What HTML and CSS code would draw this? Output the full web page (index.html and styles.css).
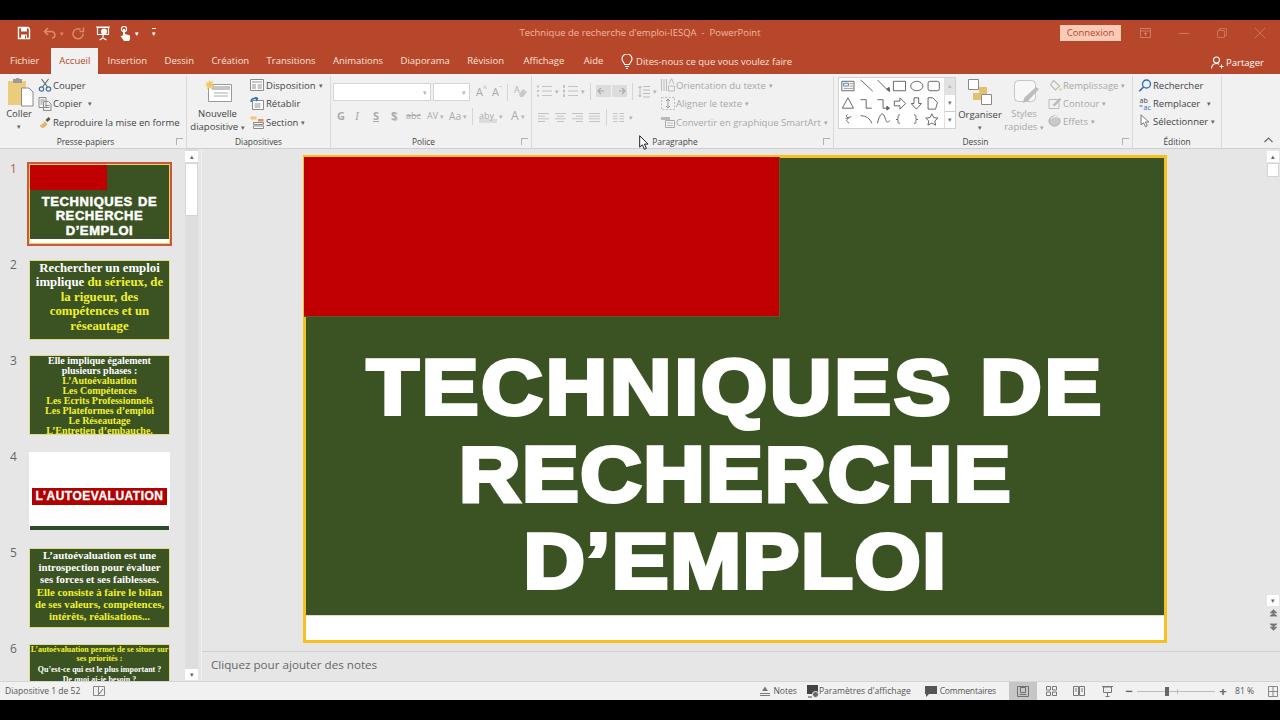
FILE: index.html
```html
<!DOCTYPE html>
<html lang="fr">
<head>
<meta charset="utf-8">
<title>Technique de recherche d'emploi-IESQA - PowerPoint</title>
<link rel="stylesheet" href="styles.css">
</head>
<body>
<div class="black top-black"></div>
<header class="titlebar">
  <div class="qat">
    <svg class="q-save" width="14" height="14" viewBox="0 0 14 14"><path d="M1.500 1.500h9.500l1.500 1.500v9.500h-11z" fill="none" stroke="#fff" stroke-width="1.400"/><path d="M4 2h6v3.500H4zM4 8.500h6v4H4z" fill="#fff"/><path d="M8 9.500h1v3H8z" fill="#b7472a"/></svg>
    <svg class="q-undo" width="14" height="12" viewBox="0 0 14 12"><path d="M5 1 1.500 4.500 5 8M2 4.500h6c5 0 5 6.500 1 6.500" fill="none" stroke="#d98a70" stroke-width="1.600"/></svg>
    <span class="q-caret faded">▾</span>
    <svg class="q-redo" width="13" height="13" viewBox="0 0 13 13"><path d="M8.500 2.500A5 5 0 1 0 11 6.500M11.500 .5v4h-4" fill="none" stroke="#d98a70" stroke-width="1.500"/></svg>
    <svg class="q-pres" width="16" height="15" viewBox="0 0 16 15"><path d="M1 1h14M2.500 1.500h11v7h-11zM8 8.500V12M4.500 14 8 12l3.500 2" fill="none" stroke="#fff" stroke-width="1.200"/><circle cx="9" cy="5.500" r="3" fill="#fff"/></svg>
    <svg class="q-touch" width="13" height="15" viewBox="0 0 13 15"><circle cx="5" cy="3" r="2.600" fill="none" stroke="#fff" stroke-width="1.200"/><path d="M4 3h2v5l5 1.500V13l-1 2H5L1.500 10 4 9.500z" fill="#fff"/></svg>
    <span class="q-caret">▾</span>
    <span class="q-more">▾</span>
  </div>
  <div class="doc-title">Technique de recherche d'emploi-IESQA  -  PowerPoint</div>
  <div class="win-controls">
    <span class="connexion">Connexion</span>
    <svg class="w-ribbon" width="11" height="10" viewBox="0 0 11 10"><path d="M.5.5h10v9H.5zM.5 3h10M5.500 8V4.500M4 6l1.500-1.500L7 6" fill="none" stroke="#cf7d62"/></svg>
    <svg class="w-btn" width="10" height="10" viewBox="0 0 10 10"><path d="M0 5.500h10" stroke="#c9735a"/></svg>
    <svg class="w-btn" width="10" height="10" viewBox="0 0 10 10"><path d="M.5 2.500h7v7h-7zM2.500 2.500v-2h7v7h-2" fill="none" stroke="#c9735a"/></svg>
    <svg class="w-btn" width="10" height="10" viewBox="0 0 10 10"><path d="m0 0 10 10M10 0 0 10" stroke="#c9735a"/></svg>
  </div>
</header>
<nav class="tabs">
  <span class="tab">Fichier</span>
  <span class="tab active">Accueil</span>
  <span class="tab">Insertion</span>
  <span class="tab">Dessin</span>
  <span class="tab">Création</span>
  <span class="tab">Transitions</span>
  <span class="tab">Animations</span>
  <span class="tab">Diaporama</span>
  <span class="tab">Révision</span>
  <span class="tab">Affichage</span>
  <span class="tab">Aide</span>
  <span class="tell">
    <svg width="12" height="15" viewBox="0 0 12 15"><path d="M3.500 10.500C3 8 1 7.500 1 5a5 5 0 0 1 10 0c0 2.500-2 3-2.500 5.500zM4 12.500h4M5 14.500h2" fill="none" stroke="#fff" stroke-width="1.100"/></svg>
    Dites-nous ce que vous voulez faire
  </span>
  <span class="share">
    <svg width="13" height="13" viewBox="0 0 13 13"><circle cx="5.500" cy="4" r="3" fill="none" stroke="#fff" stroke-width="1.100"/><path d="M.5 12.500c0-3 2-5 5-5 1 0 2 .3 2.500.7M10.500 8.500v4M8.500 10.500h4" fill="none" stroke="#fff" stroke-width="1.100"/></svg>
    Partager
  </span>
</nav>
<section class="ribbon">
  <div class="group g-clip">
    <div class="group-body">
      <div class="big b-paste">
        <svg width="26" height="29" viewBox="0 0 26 29"><path d="M0 3h18v24H0z" fill="#eccb7c"/><path d="M5 1h2.500l1-1h2l1 1H14v4H5z" fill="#9a9a9a"/><path d="M13.500 10H21l4 4v14H13.500z" fill="#fff" stroke="#8a8a8a"/></svg>
        <span>Coller</span><span class="caret">▾</span>
      </div>
      <div class="rows r-clip">
        <div class="row"><svg width="13" height="14" viewBox="0 0 13 14"><path d="m3 1 6 8M10 1 4 9" fill="none" stroke="#6a6a6a" stroke-width="1.200"/><circle cx="3" cy="11" r="2.200" fill="none" stroke="#3f6fa8" stroke-width="1.200"/><circle cx="10" cy="11" r="2.200" fill="none" stroke="#3f6fa8" stroke-width="1.200"/></svg><span>Couper</span></div>
        <div class="row"><svg width="13" height="14" viewBox="0 0 13 14"><path d="M.5.5h7v10h-7zM5 4.500h5l2.500 2.500v6.500H5zM2 3h4M2 5h2M2 7h2M7 8.500h4M7 10.500h4" fill="#f4f4f4" stroke="#8a8a8a"/></svg><span>Copier</span><span class="caret c-copy">▾</span></div>
        <div class="row"><svg width="13" height="13" viewBox="0 0 13 13"><path d="M1 9c3 0 4-2 5-4l3 3c-1 2-3 4-6 4z" fill="#e2b768"/><path d="m7 4 3-3 2 2-3 3z" fill="#555"/></svg><span>Reproduire la mise en forme</span></div>
      </div>
    </div>
    <div class="group-label has-launcher">Presse-papiers<i class="launcher"></i></div>
  </div>
  <div class="group g-slides">
    <div class="group-body">
      <div class="big b-new">
        <svg width="28" height="23" viewBox="0 0 28 23"><path d="M3.500 5.500h23v17h-23z" fill="#fff" stroke="#9a9a9a"/><path d="M7 7h18v4H7z" fill="#c5c5c5"/><path d="M9 14h14M9 17h14" stroke="#aaa"/><path d="m4.500 0 1 3 3-1-1.500 3 2.500 1.500-3 1 .5 3-2.500-2-2.500 2 .5-3-3-1L2 6 .5 3l3 1z" fill="#f0c95e"/></svg>
        <span>Nouvelle</span><span>diapositive <b class="caret inline">▾</b></span>
      </div>
      <div class="rows r-slides">
        <div class="row"><svg width="14" height="12" viewBox="0 0 14 12"><path d="M.5.5h13v11H.5z" fill="#fff" stroke="#8a8a8a"/><path d="M2 2h10v2H2zM2 5h4v5H2zM7.500 5H12v5H7.500z" fill="#c8c8c8"/></svg><span>Disposition</span><span class="caret c-inline">▾</span></div>
        <div class="row"><svg width="14" height="13" viewBox="0 0 14 13"><path d="M2.500 3.500h11v9h-11z" fill="#fff" stroke="#8a8a8a"/><path d="M4.500 6h6v5h-6z" fill="#c8c8c8"/><path d="M1 5c0-3 3-4.500 6-3.500M5 .2 7.500 1.500 6 4" fill="none" stroke="#2f6fb0" stroke-width="1.500"/></svg><span>Rétablir</span></div>
        <div class="row"><svg width="14" height="13" viewBox="0 0 14 13"><path d="M.5.5h6v3h-6z" fill="#efc777"/><path d="M3.500 6.500h10v2h-10zM3.500 10h10v2.500h-10z" fill="#fff" stroke="#8a8a8a"/><path d="M8 3h5.500v2.500H8z" fill="#e98b5e"/></svg><span>Section</span><span class="caret c-inline">▾</span></div>
      </div>
    </div>
    <div class="group-label">Diapositives</div>
  </div>
  <div class="group g-font">
    <div class="group-body col">
      <div class="tool-row tr-font">
        <span class="combo c-name"><b class="caret">▾</b></span>
        <span class="combo c-size"><b class="caret">▾</b></span>
        <span class="gly g-a1">A<sup>^</sup></span>
        <span class="gly g-a2">A<sup>ˇ</sup></span>
        <i class="vsep"></i>
        <svg class="g-clear" width="15" height="14" viewBox="0 0 15 14"><text x="1" y="8" font-size="9" fill="#b5b5b5" font-family="Open Sans">A</text><path d="m6 9 4-5 4 3-4 5H7z" fill="#c9c9c9"/></svg>
      </div>
      <div class="tool-row tr-fmt">
        <span class="fmt f-g">G</span>
        <span class="fmt f-i">I</span>
        <span class="fmt f-s">S</span>
        <span class="fmt f-sh">S</span>
        <span class="fmt f-abc">abc</span>
        <span class="fmt f-av">AV</span><b class="caret">▾</b>
        <span class="fmt f-aa">Aa</span><b class="caret">▾</b>
        <i class="vsep"></i>
        <span class="fmt f-aby">aby</span><b class="caret">▾</b>
        <span class="fmt f-ca">A</span><b class="caret">▾</b>
      </div>
    </div>
    <div class="group-label has-launcher">Police<i class="launcher"></i></div>
  </div>
  <div class="group g-para">
    <div class="group-body">
      <div class="col p-left">
        <div class="tool-row tr-para1">
          <svg width="15" height="12" viewBox="0 0 15 12"><path d="M5 1.500h10M5 6h10M5 10.500h10" stroke="#c4c4c4"/><path d="M0 .5h2v2H0zM0 5h2v2H0zM0 9.500h2v2H0z" fill="#c4c4c4"/></svg><b class="caret">▾</b>
          <svg width="15" height="12" viewBox="0 0 15 12"><path d="M5 1.500h10M5 6h10M5 10.500h10" stroke="#c4c4c4"/><path d="M0 0h2v3H0zM0 4.500h2v3H0zM0 9h2v3H0z" fill="#c4c4c4"/></svg><b class="caret">▾</b>
          <i class="vsep vs-a"></i>
          <svg class="indent" width="15" height="12" viewBox="0 0 15 12"><path d="M0 0h15v12H0z" fill="#dcdcdc"/><path d="M8 6H2M5 3 2 6l3 3" fill="none" stroke="#aaa" stroke-width="1.200"/></svg>
          <svg class="indent" width="15" height="12" viewBox="0 0 15 12"><path d="M0 0h15v12H0z" fill="#dcdcdc"/><path d="M7 6h6M10 3l3 3-3 3" fill="none" stroke="#aaa" stroke-width="1.200"/></svg>
          <i class="vsep vs-b"></i>
          <svg width="12" height="13" viewBox="0 0 12 13"><path d="M5 1.500h7M5 5h7M5 8.500h7M5 12h7M2 1v11M.5 3 2 1l1.500 2M.5 10 2 12l1.500-2" fill="none" stroke="#bbb"/></svg><b class="caret">▾</b>
        </div>
        <div class="tool-row tr-para2">
          <svg width="11" height="9" viewBox="0 0 11 9"><path d="M0 .5h11M0 3.200h7M0 5.800h11M0 8.500h7" stroke="#c4c4c4"/></svg>
          <svg width="11" height="9" viewBox="0 0 11 9"><path d="M0 .5h11M2 3.200h7M0 5.800h11M2 8.500h7" stroke="#c4c4c4"/></svg>
          <svg width="11" height="9" viewBox="0 0 11 9"><path d="M0 .5h11M4 3.200h7M0 5.800h11M4 8.500h7" stroke="#c4c4c4"/></svg>
          <svg width="11" height="9" viewBox="0 0 11 9"><path d="M0 .5h11M0 3.200h11M0 5.800h11M0 8.500h11" stroke="#c4c4c4"/></svg>
          <i class="vsep"></i>
          <svg width="11" height="9" viewBox="0 0 11 9"><path d="M0 .5h4.500M0 3.200h4.500M0 5.800h4.500M0 8.500h4.500M6.500 .5H11M6.500 3.200H11M6.500 5.800H11M6.500 8.500H11" stroke="#c4c4c4"/></svg><b class="caret">▾</b>
        </div>
      </div>
      <div class="rows r-para disabled">
        <div class="row"><svg width="14" height="14" viewBox="0 0 14 14"><path d="M.5 1v12M3 1v12M5.500 1v12" stroke="#bbb"/><path d="M7.500 8h6v5h-6zM8 6l2.500-5.500L13 6" fill="none" stroke="#bbb"/></svg><span>Orientation du texte</span><span class="caret c-inline">▾</span></div>
        <div class="row"><svg width="14" height="13" viewBox="0 0 14 13"><path d="M.5.5h13v12H.5z" fill="none" stroke="#bbb" stroke-dasharray="2 1.500"/><path d="M7 2.500v8M5 4l2-2 2 2M5 9l2 2 2-2" fill="none" stroke="#999"/></svg><span>Aligner le texte</span><span class="caret c-inline">▾</span></div>
        <div class="row"><svg width="14" height="12" viewBox="0 0 14 12"><path d="M4.500 4.500h9v7h-9z" fill="#f4f4f4" stroke="#aaa"/><path d="M0 1h9v3H0z" fill="#bbb"/><path d="M6 7h6M6 9.500h6" stroke="#bbb"/></svg><span>Convertir en graphique SmartArt</span><span class="caret c-inline">▾</span></div>
      </div>
    </div>
    <div class="group-label has-launcher">Paragraphe<i class="launcher"></i></div>
  </div>
  <div class="group g-draw">
    <div class="group-body">
      <div class="gallery">
        <svg width="105" height="50" viewBox="0 2 112 53" preserveAspectRatio="none" fill="none" stroke="#5f5f5f">
          <path d="M3 5.500h13v10H3z"/><path d="M5 7.500h5v3H5z" stroke="#4a7ab0"/><path d="M11 8h4M11 10.500h4M5 13h10" stroke="#999"/>
          <path d="m23 4 13 12M41 4l12 12"/><path d="m51 13.500 3 3-.5-4.500z" fill="#5f5f5f"/>
          <path d="M58 5.500h13v10H58z"/><ellipse cx="83" cy="10.500" rx="6.500" ry="5"/><path d="M97 5.500h8a2 2 0 0 1 2 2v6a2 2 0 0 1-2 2h-8a2 2 0 0 1-2-2v-6a2 2 0 0 1 2-2z"/>
          <path d="m9.500 23 6 11h-12z"/>
          <path d="M23 25h6v9h6M41 25h6v9h5"/><path d="m51 32 3 2-3 2z" fill="#5f5f5f"/>
          <path d="M59 26.500h6V23l6 6-6 6v-3.500h-6z"/><path d="M80 23h5v6h3l-5.500 6-5.500-6h3z"/><path d="M95 23h5l5 5-2 7H95z"/>
          <path d="M9 41c-4 2 3 3 0 5s3 3 1 4M13 43l-6 2"/><path d="M23 42c6 0 10 3 12 8"/><path d="M41 50c3-12 6-12 8-6s3 6 5 3"/>
          <path d="M65 41c-2 0-2 1-2 3s0 2-2 2c2 0 2 0 2 2s0 2 2 2"/><path d="M80 41c2 0 2 1 2 3s0 2 2 2c-2 0-2 0-2 2s0 2-2 2"/>
          <path d="m99 40 2 4 4.500.5-3.300 3 .9 4.500-4.100-2.300-4.100 2.300.9-4.500-3.300-3 4.500-.5z"/>
        </svg>
        <div class="gal-scroll">
          <span class="gs gs-up">▴</span><span class="gs gs-down">▾</span><span class="gs gs-more">▾</span>
        </div>
      </div>
      <div class="big b-org">
        <svg width="25" height="26" viewBox="0 0 25 26"><path d="M11 8h8v7h-8zM5 14h8v7H5z" fill="#e4c073"/><path d="M.5.5h10v10H.5zM13.500 15.500h10v10h-10z" fill="#fff" stroke="#8a8a8a"/></svg>
        <span>Organiser</span><span class="caret">▾</span>
      </div>
      <div class="big b-styles disabled">
        <svg width="26" height="25" viewBox="0 0 26 25"><rect x=".5" y=".5" width="21" height="21" rx="4" fill="#f7f7f7" stroke="#c5c5c5"/><path d="m10 18 12-11 3 2-11 12-5 2z" fill="#bdbdbd"/></svg>
        <span>Styles</span><span>rapides <b class="caret inline">▾</b></span>
      </div>
      <div class="rows r-draw disabled">
        <div class="row"><svg width="13" height="13" viewBox="0 0 13 13"><path d="M5 1.500 11 7l-4 4-5-5z" fill="none" stroke="#bbb" stroke-width="1.200"/><path d="M12 9.500v2" stroke="#e6c37a" stroke-width="2"/></svg><span>Remplissage</span><span class="caret c-inline">▾</span></div>
        <div class="row"><svg width="13" height="12" viewBox="0 0 13 12"><path d="M.5 2.500h10v9H.5z" fill="none" stroke="#bbb"/><path d="m4 8 7-7 2 1.500L6 9.500z" fill="#bbb"/></svg><span>Contour</span><span class="caret c-inline">▾</span></div>
        <div class="row"><svg width="13" height="12" viewBox="0 0 13 12"><ellipse cx="6" cy="6" rx="5.500" ry="5" fill="#c9c9c9" stroke="#aaa"/><path d="M2 4c3-3 6-3 9-1" stroke="#fff" fill="none"/></svg><span>Effets</span><span class="caret c-inline">▾</span></div>
      </div>
    </div>
    <div class="group-label has-launcher">Dessin<i class="launcher"></i></div>
  </div>
  <div class="group g-edit">
    <div class="group-body">
      <div class="rows r-edit">
        <div class="row"><svg width="13" height="13" viewBox="0 0 13 13"><circle cx="8" cy="5" r="4" fill="none" stroke="#2b6cb0" stroke-width="1.300"/><path d="M5 8 .8 12.200" stroke="#2b6cb0" stroke-width="1.600"/></svg><span>Rechercher</span></div>
        <div class="row"><svg width="13" height="13" viewBox="0 0 13 13"><text x="1" y="6" font-size="7" fill="#444" font-family="Open Sans">ab</text><text x="5" y="12.500" font-size="7" fill="#2b6cb0" font-family="Open Sans">ac</text><path d="M4 9H1" stroke="#2b6cb0"/></svg><span>Remplacer</span><span class="caret c-rep">▾</span></div>
        <div class="row"><svg width="13" height="14" viewBox="0 0 13 14"><path d="M2.500 .8v10l2.500-2 2 4 1.800-1-2-3.800h3.500z" fill="#fff" stroke="#777"/></svg><span>Sélectionner</span><span class="caret c-inline">▾</span></div>
      </div>
    </div>
    <div class="group-label">Édition</div>
  </div>
  <div class="collapse"><svg width="9" height="6" viewBox="0 0 9 6"><path d="m.5 5 4-4 4 4" fill="none" stroke="#666" stroke-width="1.200"/></svg></div>
</section>
<svg class="cursor" width="10" height="15" viewBox="0 0 10 15"><path d="M.7.7v11.500l2.700-2.400 2 4.500 2-.9-2-4.300h3.600z" fill="#fff" stroke="#222"/></svg>
<div class="workspace">
  <aside class="thumbs">
    <div class="thumb-list">
      <div class="thumb-row first"><span class="num sel">1</span>
        <div class="thumb t1">
          <div class="t1-red"></div>
          <div class="t1-title">TECHNIQUES DE<br>RECHERCHE<br>D’EMPLOI</div>
          <div class="t1-foot"></div>
        </div>
      </div>
      <div class="thumb-row"><span class="num">2</span>
        <div class="thumb green t2">Rechercher un emploi<br>implique <em>du sérieux, de<br>la rigueur, des<br>compétences et un<br>réseautage</em></div>
      </div>
      <div class="thumb-row"><span class="num">3</span>
        <div class="thumb green t3">Elle implique également<br>plusieurs phases :<br><em>L’Autoévaluation<br>Les Compétences<br>Les Ecrits Professionnels<br>Les Plateformes d’emploi<br>Le Réseautage<br>L’Entretien d’embauche.</em></div>
      </div>
      <div class="thumb-row"><span class="num">4</span>
        <div class="thumb t4"><div class="t4-bar">L’AUTOEVALUATION</div><div class="t4-foot"></div></div>
      </div>
      <div class="thumb-row"><span class="num">5</span>
        <div class="thumb green t5">L’autoévaluation est une<br>introspection pour évaluer<br>ses forces et ses faiblesses.<br><em class="t5-em">Elle consiste à faire le bilan<br>de ses valeurs, compétences,<br>intérêts, réalisations...</em></div>
      </div>
      <div class="thumb-row"><span class="num">6</span>
        <div class="thumb green t6"><em>L’autoévaluation permet de se situer sur<br>ses priorités :</em><p>Qu’est-ce qui est le plus important ?<br>De quoi ai-je besoin ?</p></div>
      </div>
    </div>
    <div class="sb sb-left">
      <span class="sb-btn">▴</span>
      <span class="sb-thumb tall"></span>
      <span class="sb-fill"></span>
      <span class="sb-btn">▾</span>
    </div>
  </aside>
  <main class="main">
    <div class="editor">
      <div class="slide-wrap">
        <article class="slide">
          <div class="slide-green">
            <div class="slide-red"></div>
            <h1 class="slide-title"><span class="title-first">TECHNIQUES DE</span><br>RECHERCHE<br>D’EMPLOI</h1>
          </div>
          <div class="slide-foot"></div>
        </article>
      </div>
      <div class="sb sb-right">
        <span class="sb-btn">▴</span>
        <span class="sb-thumb short"></span>
        <span class="sb-fill"></span>
        <span class="sb-btn">▾</span>
        <span class="sb-nav"><svg width="9" height="8" viewBox="0 0 9 8"><path d="M.5 8h8M1 4l3.500-3.500L8 4zM1 7l3.500-3L8 7z" fill="#777" stroke="#777" stroke-width=".5"/></svg></span>
        <span class="sb-nav"><svg width="9" height="8" viewBox="0 0 9 8"><path d="M.5 0h8M1 4l3.500 3.500L8 4zM1 1l3.500 3L8 1z" fill="#777" stroke="#777" stroke-width=".5"/></svg></span>
      </div>
    </div>
    <div class="notes">Cliquez pour ajouter des notes</div>
  </main>
</div>
<footer class="status">
  <span class="st-count">Diapositive 1 de 52</span>
  <svg class="st-spell" width="12" height="11" viewBox="0 0 12 11"><path d="M.5.5h5v9h-5zM5.500.5h6v9h-6z" fill="none" stroke="#888"/><path d="m6 8 4-5" stroke="#666"/></svg>
  <span class="st-right">
    <span class="st-item it-notes"><svg width="10" height="10" viewBox="0 0 10 10"><path d="M0 7.500h10M0 9.500h10" stroke="#777"/><path d="M2 5 5 .5 8 5z" fill="#777"/></svg>Notes</span>
    <span class="st-item it-disp"><svg width="12" height="13" viewBox="0 0 12 13"><path d="M0 0h11v9H0z" fill="#444"/><path d="M1 12h4" stroke="#444"/><circle cx="8.500" cy="9.500" r="3" fill="#666" stroke="#f1f1f1"/></svg>Paramètres d'affichage</span>
    <span class="st-item it-comm"><svg width="12" height="11" viewBox="0 0 12 11"><path d="M0 0h12v8H4l-3 3V8H0z" fill="#555"/></svg>Commentaires</span>
    <span class="view active"><svg width="12" height="11" viewBox="0 0 12 11"><path d="M.5.500h11v10H.5zM3.500 1.500h5v5h-5zM2.500 8.500h7" fill="none" stroke="#6f6f6f"/></svg></span>
    <span class="view"><svg width="11" height="10" viewBox="0 0 11 10"><path d="M.5.500h4v3.500h-4zM6.500.5h4v3.500h-4zM.5 6h4v3.500h-4zM6.500 6h4v3.500h-4z" fill="none" stroke="#777"/></svg></span>
    <span class="view"><svg width="12" height="10" viewBox="0 0 12 10"><path d="M.5.500h5v9h-5zM6.500.5h5v9h-5zM2 3h2M2 5h2M8 3h2M8 5h2" fill="none" stroke="#777"/></svg></span>
    <span class="view"><svg width="11" height="11" viewBox="0 0 11 11"><path d="M0 .5h11M1.500 1v5.500h8V1zM5.500 6.500V10M3.500 10.500h4" fill="none" stroke="#777"/></svg></span>
    <span class="zoom-minus">−</span>
    <span class="slider"><i class="tick"></i><i class="knob"></i></span>
    <span class="zoom-plus">+</span>
    <span class="zoom-pct">81 %</span>
    <svg class="st-fit" width="10" height="11" viewBox="0 0 10 11"><path d="M.5.500h9v10h-9zM.5 5.500h9M5 .5v10" fill="none" stroke="#888"/></svg>
  </span>
</footer>
<div class="black bottom-black"></div>
</body>
</html>
```

FILE: styles.css
```css
* { box-sizing: border-box; }
html, body { margin: 0; padding: 0; }
body {
  width: 1280px; height: 720px; overflow: hidden; position: relative;
  display: flex; flex-direction: column;
  font-family: "Open Sans", "Noto Sans", sans-serif; font-size: 9.500px; color: #444; background: #000;
}
svg { display: block; flex: none; }
.black { height: 20px; background: #000; flex: none; }

/* title bar */
.titlebar { height: 28px; flex: none; background: #b7472a; color: #f6c9b5; display: flex; align-items: center; position: relative; padding-bottom: 2px; }
.qat { display: flex; align-items: center; padding-left: 17px; width: 320px; color: #fff; }
.q-undo { margin-left: 12px; }
.q-caret { font-size: 7px; margin-left: 3px; width: 8px; }
.q-caret.faded { color: #d98a70; }
.q-redo { margin-left: 4px; }
.q-pres { margin-left: 10px; }
.q-touch { margin-left: 8px; }
.q-more { font-size: 7px; margin-left: 9px; text-decoration: overline; }
.doc-title { position: absolute; left: 0; right: 0; top: 6px; text-align: center; white-space: pre; font-size: 9.500px; line-height: 14px; color: #f2b9a2; }
.win-controls { margin-left: auto; display: flex; align-items: center; z-index: 1; padding-right: 15px; }
.connexion { width: 61px; height: 16px; background: #fbcbb7; color: #b7472a; text-align: center; line-height: 16px; font-size: 9.500px; margin-right: 19px; }
.w-ribbon { margin-right: 28px; }
.w-btn { margin-right: 28px; }
.w-btn:last-child { margin-right: 0; }

/* tabs */
.tabs { height: 26px; flex: none; background: #b7472a; display: flex; align-items: stretch; color: #fbe3d8; padding-left: 1px; }
.tab { padding: 0 8.700px; line-height: 26px; white-space: nowrap; }
.tab:first-child { padding-left: 9px; padding-right: 9px; }
.tab.active { background: #f1f1f1; color: #b7472a; padding: 0 8px; margin-left: 3px; }
.tab.active + .tab { margin-left: .5px; }
.tab:nth-child(10), .tab:nth-child(11) { margin-left: 2px; }
.tell { display: flex; align-items: center; gap: 3px; margin-left: 9px; white-space: nowrap; }
.share { display: flex; align-items: center; gap: 2px; margin-left: auto; padding-right: 16px; padding-top: 2px; color: #fff; white-space: nowrap; }

/* ribbon */
.ribbon { height: 75px; flex: none; background: #f1f1f1; border-bottom: 1px solid #cfcfcf; display: flex; position: relative; }
.group { display: flex; flex-direction: column; flex: none; border-right: 1px solid #dadada; height: 73px; margin-top: 2px; position: relative; }
.group-body { flex: 1; display: flex; min-height: 0; }
.group-body.col { flex-direction: column; }
.col { display: flex; flex-direction: column; }
.group-label { height: 16px; line-height: 18px; text-align: center; font-size: 8.400px; color: #444; position: relative; }
.has-launcher { padding-right: 15px; }
.launcher { position: absolute; right: 3px; top: 5px; width: 7px; height: 7px; border-left: 1px solid #b0b0b0; border-top: 1px solid #b0b0b0; }
.g-clip { width: 187px; }
.g-slides { width: 144px; }
.g-font { width: 201px; }
.g-para { width: 302px; }
.g-draw { width: 299px; }
.g-edit { width: 89px; }
.big { display: flex; flex-direction: column; align-items: center; line-height: 13px; flex: none; text-align: center; white-space: nowrap; }
.big svg { margin-bottom: 3px; }
.caret { font-size: 7px; color: #666; font-weight: normal; line-height: 13px; }
.caret.inline { display: inline; }
.b-paste { width: 38px; padding-top: 2px; }
.b-paste svg { margin-left: 4px; margin-bottom: 0; }
.rows { display: flex; flex-direction: column; flex: none; }
.row { height: 18.600px; display: flex; align-items: center; white-space: nowrap; }
.row svg { margin-right: 1px; width: 14px; }
.c-copy { margin-left: 6px; }
.c-inline { margin-left: 3px; }
.c-rep { margin-left: 7px; }
.b-new { width: 61px; padding-top: 3px; }
.b-new svg { margin-bottom: 5px; margin-left: 2px; }
.r-slides { margin-left: 2px; }
.r-slides .row svg { margin-right: 2px; }
.r-para { margin-left: 1px; }
.disabled, .disabled .caret { color: #a8a8a8; }
.tool-row { display: flex; align-items: center; }
.tr-font { height: 20px; margin-top: 6px; padding-left: 2px; }
.combo { height: 18px; background: #fff; border: 1px solid #d5d5d5; position: relative; display: block; }
.combo .caret { position: absolute; right: 3px; top: 2px; color: #b5b5b5; }
.c-name { width: 98px; }
.c-size { width: 37px; margin-left: 2px; }
.gly { color: #aaa; font-size: 11px; line-height: 14px; }
.gly sup { font-size: 7px; line-height: 0; }
.g-a1 { margin-left: 6px; }
.g-a2 { margin-left: 5px; }
.vsep { display: block; width: 1px; height: 17px; background: #d5d5d5; margin: 0 5px; flex: none; }
.tr-fmt { margin-top: 4px; padding-left: 6px; height: 20px; color: #aaa; }
.tr-fmt .caret { color: #b5b5b5; margin-left: 2px; }
.fmt { color: #aaa; font-size: 11px; line-height: 14px; }
.f-g { font-weight: 700; width: 18px; }
.f-i { font-style: italic; width: 18px; font-family: "Liberation Serif", serif; font-size: 12px; }
.f-s { text-decoration: underline; width: 18px; font-weight: 700; }
.f-sh { width: 15px; font-weight: 700; text-shadow: 1px 1px 0 #ccc; }
.f-abc { text-decoration: line-through; width: 21px; font-size: 9px; }
.f-av { font-size: 9px; }
.f-aa { margin-left: 5px; font-size: 10px; }
.f-aby { font-size: 9px; background: linear-gradient(transparent 70%, #dcdcdc 70%); margin-left: 1px; width: 18px; }
.f-ca { margin-left: 8px; font-size: 12px; }
.p-left { width: 128px; padding-left: 5px; flex: none; }
.tr-para1 { height: 20px; margin-top: 5px; }
.tr-para1 .caret { margin: 0 4px 0 3px; color: #b5b5b5; }
.tr-para1 svg.indent { margin-right: 1px; }
.vs-a { margin: 0 5px 0 1px; }
.vs-b { margin: 0 5px 0 4px; }
.tr-para2 { height: 20px; margin-top: 6px; gap: 6px; padding-left: 1px; }
.tr-para2 .vsep { margin: 0; }
.tr-para2 .caret { margin-left: -1px; color: #b5b5b5; }
.gallery { margin: 1px 0 0 4px; width: 118px; height: 52px; background: #fff; border: 1px solid #d0d0d0; display: flex; flex: none; }
.gallery > svg { width: 105px; height: 50px; }
.gal-scroll { width: 12px; display: flex; flex-direction: column; border-left: 1px solid #e0e0e0; }
.gs { height: 16.600px; font-size: 7px; color: #777; text-align: center; line-height: 16px; }
.gs-up { background: #e2e2e2; color: #bbb; }
.gs-more { border-top: 1px solid #ccc; }
.b-org { width: 44px; margin-left: 2px; padding-top: 3px; }
.b-org svg { margin-bottom: 3px; }
.b-styles { width: 44px; padding-top: 4px; }
.b-styles svg { margin-bottom: 2px; margin-left: 6px; }
.r-draw { margin-left: 2px; }
.r-edit { padding-left: 5px; }
.r-draw .row, .r-edit .row { height: 18px; }
.collapse { flex: 1; display: flex; justify-content: flex-end; padding: 63px 7px 0 0; }
.cursor { position: absolute; left: 639px; top: 135px; z-index: 5; }

/* workspace */
.workspace { flex: 1; min-height: 0; display: flex; background: #e6e6e6; }
.thumbs { width: 202px; flex: none; display: flex; border-right: 1px solid #f0f0f0; padding-right: 2px; overflow: hidden; }
.thumb-list { flex: 1; min-width: 0; height: 532px; overflow: hidden; padding-top: 15px; }
.thumb-row { display: flex; height: 96px; }
.num { width: 29px; flex: none; padding-left: 10px; margin-top: -2px; font-size: 12px; line-height: 14px; color: #666; }
.num.sel { color: #c0563b; }
.thumb { width: 141px; height: 80px; flex: none; overflow: hidden; text-align: center; }
.green { background: #3b5323; border: 1px solid #e3d98a; color: #fff; font-family: "Liberation Serif", serif; font-weight: 700; }
.green em { font-style: normal; color: #f2f22c; }
.t1 { background: #3b5323; border: 1px solid #f0d060; outline: 2px solid #c9583c; display: flex; flex-direction: column; }
.t1-red { width: 77px; height: 25px; background: #c00000; flex: none; }
.t1-title { flex: 1; color: #fff; font-family: "Liberation Sans", sans-serif; font-weight: 700; font-size: 13px; line-height: 14.400px; padding-top: 5px; letter-spacing: .6px; word-spacing: 1px; -webkit-text-stroke: .5px #fff; white-space: nowrap; }
.t1-foot { height: 4px; background: #fff; flex: none; }
.t2 { font-size: 12.800px; line-height: 14.400px; }
.t3 { font-size: 10px; line-height: 10px; margin-top: -1px; height: 80px; white-space: nowrap; }
.t4 { background: #fff; height: 78px; display: flex; flex-direction: column; justify-content: flex-end; }
.t4-bar { background: #b00000; color: #fff; font-family: "Liberation Sans", sans-serif; font-weight: 700; font-size: 12px; line-height: 17px; letter-spacing: .5px; -webkit-text-stroke: .3px #fff; margin: 0 3px 21px 3px; white-space: nowrap; }
.t4-foot { height: 4px; background: #2d4a2a; flex: none; margin: 0 1px; }
.t5 { font-size: 10.800px; line-height: 12.200px; white-space: nowrap; }
.t5-em { display: block; }
.t6 { height: 40px; font-size: 8px; line-height: 9px; white-space: nowrap; }
.t6 p { margin: 2px 0 0; font-size: 8px; line-height: 9.500px; }

/* scrollbars */
.sb { display: flex; flex-direction: column; flex: none; background: #dcdcdc; }
.sb-left { width: 13px; margin-right: 1px; height: 531px; padding-top: 2px; }
.sb-right { width: 12px; background: transparent; margin-left: auto; margin-right: 1px; padding: 2px 0 17px; }
.sb-btn { height: 11px; background: #fff; color: #666; font-size: 7px; line-height: 11px; text-align: center; flex: none; }
.sb-thumb { background: #fff; border: 1px solid #d5d5d5; margin-top: 1px; flex: none; }
.tall { height: 53px; }
.short { height: 14px; }
.sb-fill { flex: 1; background: #dedede; }
.sb-right .sb-fill { background: #e6e6e6; }
.sb-nav { height: 14px; flex: none; display: flex; align-items: center; justify-content: center; }

/* editor */
.main { flex: 1; min-width: 0; display: flex; flex-direction: column; }
.editor { height: 502px; flex: none; display: flex; }
.slide-wrap { padding: 6px 0 0 101px; }
.slide { width: 864px; height: 488px; border: 3px solid #f7c11d; background: #fff; display: flex; flex-direction: column; }
.slide-green { height: 457px; background: #3b5323; flex: none; }
.slide-red { width: 476px; height: 160px; margin: -1px 0 0 -2px; background: #c00000; border-right: 1px solid #5a5a2a; border-bottom: 1px solid #5a5a2a; }
.slide-title { margin: 0; padding: 27px 0 0 1px; font-family: "Liberation Sans", sans-serif; font-weight: 700; color: #fff; font-size: 78px; line-height: 87px; text-align: center; letter-spacing: 1.500px; -webkit-text-stroke: 4px #fff; transform: scaleX(1.09); white-space: nowrap; }
.title-first { letter-spacing: 2.700px; }
.slide-foot { flex: 1; background: #fff; border-top: 1px solid #d9e0c8; }
.notes { flex: 1; border-top: 1px solid #d0d0d0; padding: 5px 0 0 9px; font-size: 11.650px; line-height: 16px; color: #666; }

/* status */
.status { height: 19px; flex: none; background: #f1f1f1; border-top: 1px solid #d5d5d5; display: flex; align-items: center; padding-left: 5px; font-size: 8.550px; color: #555; white-space: nowrap; }
.st-spell { margin-left: 13px; }
.st-right { margin-left: auto; display: flex; align-items: center; height: 100%; padding-right: 2px; }
.st-item { display: flex; align-items: center; gap: 3px; }
.it-notes { margin-right: 10px; }
.it-disp { gap: 0; margin-right: 14px; }
.it-comm { margin-right: 13px; letter-spacing: -.2px; }
.view { width: 28px; height: 100%; display: flex; align-items: center; justify-content: center; }
.view.active { background: #c6c6c6; }
.zoom-minus, .zoom-plus { width: 10px; font-size: 13px; line-height: 14px; text-align: center; color: #666; font-weight: 700; }
.zoom-minus { margin-left: 3px; }
.slider { position: relative; display: block; width: 78px; height: 1px; background: #bdbdbd; margin: 0 3px; }
.knob { position: absolute; left: 28px; top: -4px; width: 4px; height: 9px; background: #666; }
.tick { position: absolute; left: 40px; top: -2px; width: 1px; height: 5px; background: #bdbdbd; }
.zoom-pct { margin-left: 7px; width: 32px; }
.st-fit { margin-left: 1px; }
```
